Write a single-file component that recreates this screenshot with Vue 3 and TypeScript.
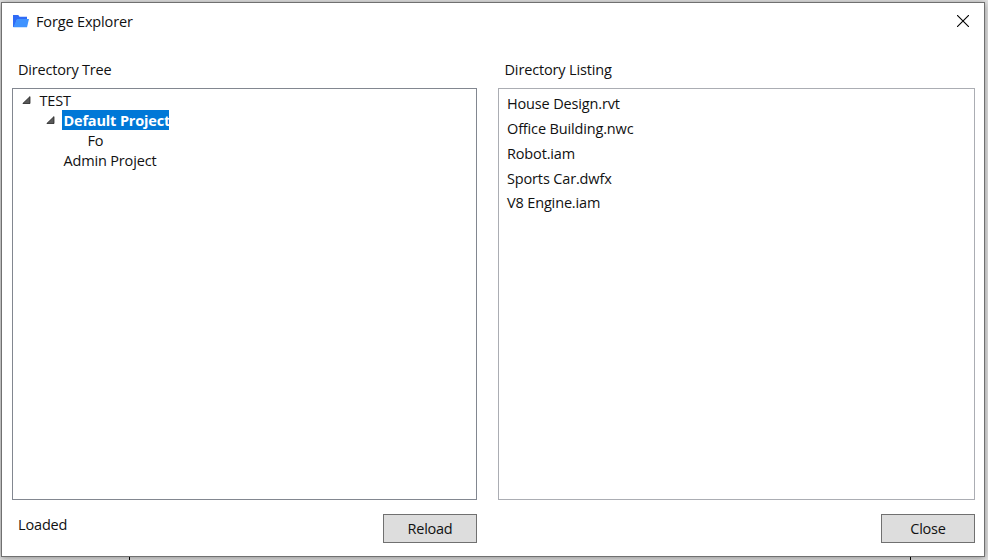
<script setup lang="ts">
interface TreeRow {
  name: string
  depth: number
  expanded: boolean
  selected: boolean
}

const tree: TreeRow[] = [
  { name: 'TEST', depth: 0, expanded: true, selected: false },
  { name: 'Default Project', depth: 1, expanded: true, selected: true },
  { name: 'Fo', depth: 2, expanded: false, selected: false },
  { name: 'Admin Project', depth: 1, expanded: false, selected: false },
]

const files: string[] = [
  'House Design.rvt',
  'Office Building.nwc',
  'Robot.iam',
  'Sports Car.dwfx',
  'V8 Engine.iam',
]
</script>

<template>
  <div class="desktop">
    <main class="window">
      <header class="titlebar">
        <svg class="folder" width="16" height="13" viewBox="0 0 16 13">
          <path d="M0 0h5.3l1.2 1.7H14V5H4L1.2 12H0z" fill="#2f6bf6" />
          <path d="M4 4h12l-2 8.3H.3z" fill="#4093ff" />
        </svg>
        <span class="title">Forge Explorer</span>
        <svg class="close" width="12" height="12" viewBox="0 0 12 12">
          <path d="M0 0l12 12M12 0L0 12" stroke="#000" stroke-width="1.1" />
        </svg>
      </header>
      <div class="columns">
        <section class="column left">
          <h2 class="tree-label">Directory Tree</h2>
          <div class="panel tree">
            <div v-for="row in tree" :key="row.name" class="row" :class="'depth-' + row.depth">
              <span class="arrow">
                <svg v-if="row.expanded" width="9" height="8" viewBox="0 0 9 8">
                  <path d="M.8 7.5L8 .6v6.9z" fill="#595959" stroke="#262626" stroke-width=".8" />
                </svg>
              </span>
              <span class="name" :class="{ selected: row.selected }">{{ row.name }}</span>
            </div>
          </div>
          <footer class="footer">
            <span class="status">Loaded</span>
            <button class="reload">Reload</button>
          </footer>
        </section>
        <section class="column right">
          <h2 class="list-label">Directory Listing</h2>
          <div class="panel list">
            <div v-for="file in files" :key="file" class="file">{{ file }}</div>
          </div>
          <footer class="footer">
            <button>Close</button>
          </footer>
        </section>
      </div>
    </main>
    <div class="ticks"><i></i><i></i></div>
  </div>
</template>

<style>
body {
  margin: 0;
  overflow: hidden;
}
</style>

<style scoped>
.desktop {
  box-sizing: border-box;
  width: 988px;
  height: 560px;
  padding: 2px 3px 0 1px;
  background: #e4e4e4;
  overflow: hidden;
  font-family: "Open Sans", "Noto Sans", sans-serif;
  font-size: 14.5px;
  letter-spacing: -0.15px;
  line-height: 20px;
  color: #111;
}
.window {
  box-sizing: border-box;
  display: flex;
  flex-direction: column;
  height: 555px;
  border: 1px solid #707070;
  background: #fff;
  box-shadow: 0 1px 7px rgba(0, 0, 0, 0.4);
}
.titlebar {
  display: flex;
  align-items: center;
  height: 37px;
  padding: 0 15px 0 11px;
}
.title {
  margin-left: 7px;
}
.close {
  margin-left: auto;
  margin-top: -1px;
}
.columns {
  display: flex;
  gap: 21px;
  padding: 20px 9px 0 10px;
}
.left {
  width: 465px;
}
.right {
  width: 477px;
}
h2 {
  margin: 0 0 8px;
  padding-left: 6px;
  font-size: inherit;
  font-weight: 400;
  line-height: 20px;
}
.tree-label {
  letter-spacing: -0.2px;
}
.list-label {
  padding-left: 6.5px;
}
.panel {
  box-sizing: border-box;
  height: 412px;
  border: 1px solid #828790;
}
.list {
  border-color: #abadb3;
  padding: 3.2px 8px;
}
.tree {
  padding: 1px 9px;
}
.row {
  display: flex;
  height: 20px;
}
.depth-1 {
  padding-left: 24px;
}
.depth-2 {
  padding-left: 48px;
}
.arrow {
  width: 16px;
  padding-top: 6px;
  line-height: 0;
}
.name {
  padding-left: 1.4px;
  line-height: 22px;
  white-space: nowrap;
}
.selected {
  box-sizing: border-box;
  width: 107px;
  overflow: hidden;
  background: #0078d7;
  color: #fff;
  font-weight: 700;
}
.file {
  height: 24.8px;
  line-height: 24.8px;
}
.footer {
  display: flex;
  justify-content: space-between;
  padding-top: 14px;
}
.status {
  padding: 1px 0 0 6px;
}
button {
  box-sizing: border-box;
  width: 94px;
  height: 29px;
  margin: 0 0 0 auto;
  padding: 0;
  border: 1px solid #707070;
  border-radius: 0;
  background: #ddd;
  color: inherit;
  font: inherit;
  letter-spacing: -0.25px;
}
.ticks {
  display: flex;
  justify-content: space-between;
  padding: 0 74px 0 128px;
}
.ticks i {
  width: 1px;
  height: 3px;
  background: #000;
}
</style>
